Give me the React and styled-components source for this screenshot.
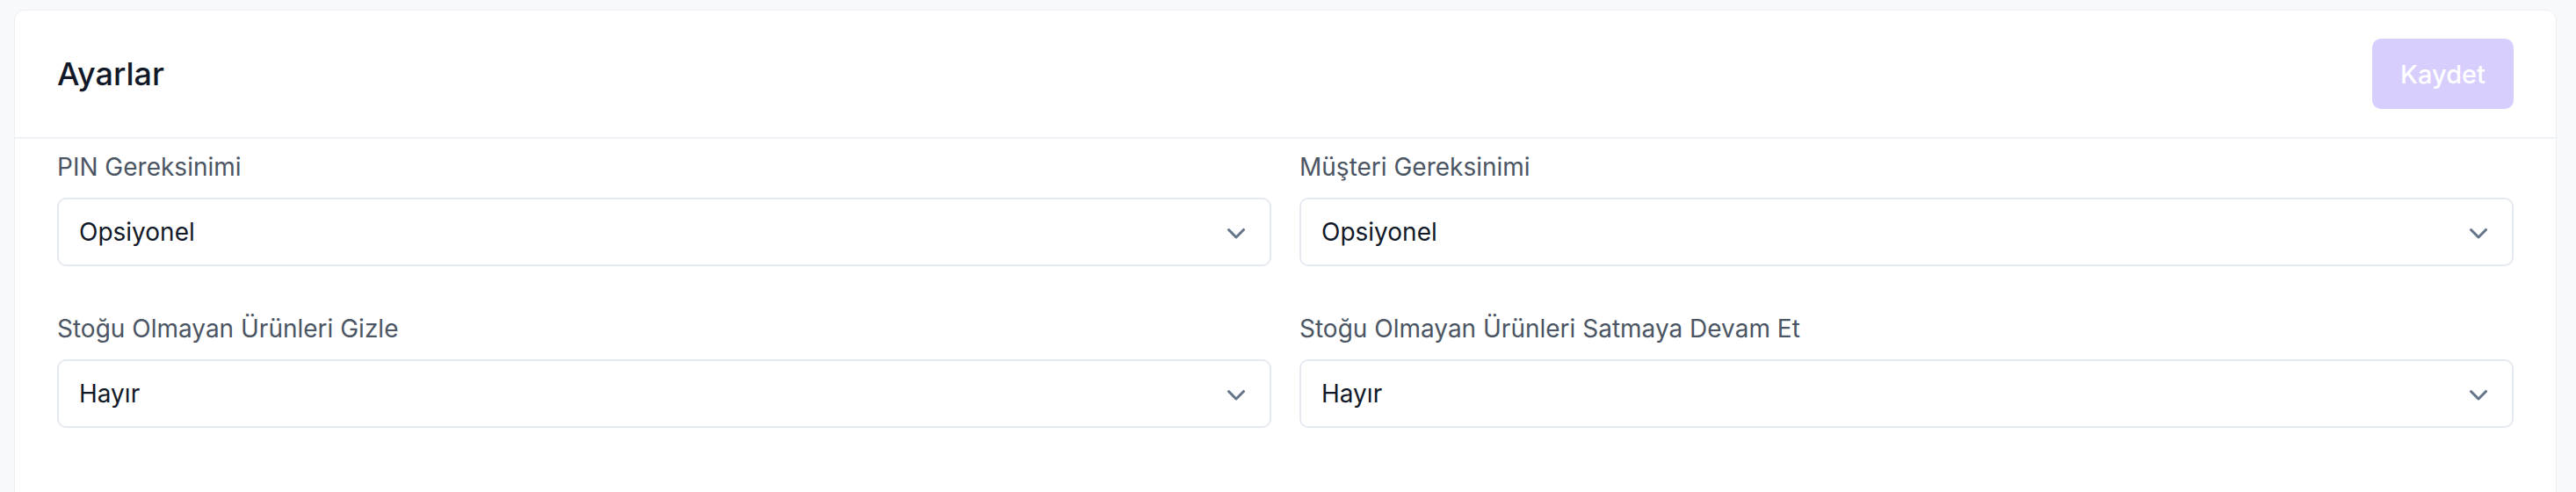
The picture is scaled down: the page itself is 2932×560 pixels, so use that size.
import React from "react";
import styled, { createGlobalStyle } from "styled-components";

const GlobalStyle = createGlobalStyle`
  body {
    margin: 0;
    background: #f8f9fb;
    font-family: Inter, "Noto Sans", "Liberation Sans", sans-serif;
    -webkit-font-smoothing: antialiased;
  }
`;

const settings = [
  { label: "PIN Gereksinimi", value: "Opsiyonel" },
  { label: "Müşteri Gereksinimi", value: "Opsiyonel" },
  { label: "Stoğu Olmayan Ürünleri Gizle", value: "Hayır" },
  { label: "Stoğu Olmayan Ürünleri Satmaya Devam Et", value: "Hayır" },
];

const ChevronDown = () => (
  <svg width="40" height="40" viewBox="0 0 20 20" fill="currentColor">
    <path
      fillRule="evenodd"
      d="M5.22 8.22a.75.75 0 0 1 1.06 0L10 11.94l3.72-3.72a.75.75 0 1 1 1.06 1.06l-4.25 4.25a.75.75 0 0 1-1.06 0L5.22 9.28a.75.75 0 0 1 0-1.06Z"
      clipRule="evenodd"
    />
  </svg>
);

const App = () => {
  return (
    <>
      <GlobalStyle />
      <Page>
        <Card>
          <Header>
            <Title>Ayarlar</Title>
            <SaveButton disabled>Kaydet</SaveButton>
          </Header>
          <Body>
            {settings.map((s) => (
              <Field key={s.label}>
                <Label>{s.label}</Label>
                <SelectBox>
                  <Value>{s.value}</Value>
                  <Chevron>
                    <ChevronDown />
                  </Chevron>
                </SelectBox>
              </Field>
            ))}
          </Body>
        </Card>
      </Page>
    </>
  );
};

const Page = styled.div`
  padding: 11px 22px 0 16px;
  height: 560px;
  box-sizing: border-box;
  overflow: hidden;
`;

const Card = styled.div`
  background: #ffffff;
  border: 1px solid #eceff3;
  border-radius: 12px;
  min-height: 640px;
`;

const Header = styled.div`
  display: flex;
  align-items: center;
  justify-content: space-between;
  padding: 32px 48px;
  border-bottom: 2px solid #eef1f5;
  height: 80px;
`;

const Title = styled.h2`
  margin: 0;
  font-size: 36px;
  line-height: 56px;
  font-weight: 500;
  color: #111827;
`;

const SaveButton = styled.button`
  height: 80px;
  padding: 0 32px;
  border: none;
  border-radius: 10px;
  background: #d8cefe;
  color: #ffffff;
  font-family: inherit;
  font-size: 29px;
  font-weight: 500;
  cursor: not-allowed;
`;

const Body = styled.div`
  display: grid;
  grid-template-columns: 1fr 1fr;
  column-gap: 32px;
  row-gap: 51px;
  padding: 12px 48px 48px;
`;

const Field = styled.div`
  display: flex;
  flex-direction: column;
`;

const Label = styled.label`
  font-size: 28px;
  line-height: 40px;
  color: #4b5563;
  margin-bottom: 15px;
`;

const SelectBox = styled.div`
  display: flex;
  align-items: center;
  justify-content: space-between;
  height: 78px;
  box-sizing: border-box;
  padding: 0 18px 0 23px;
  border: 2px solid #e5e9f0;
  border-radius: 10px;
  background: #ffffff;
`;

const Value = styled.span`
  font-size: 28px;
  color: #111827;
`;

const Chevron = styled.span`
  display: flex;
  color: #64748b;
`;

export default App;
